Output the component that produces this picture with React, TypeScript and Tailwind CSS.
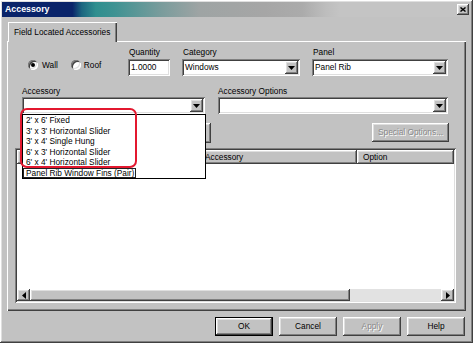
import React from "react";

// classic 3D edges
const raised =
  "shadow-[inset_-1px_-1px_0_#404040,inset_1px_1px_0_#ffffff,inset_-2px_-2px_0_#808080,inset_2px_2px_0_#dfdfdf]";
const sunken =
  "shadow-[inset_1px_1px_0_#808080,inset_-1px_-1px_0_#ffffff,inset_2px_2px_0_#404040,inset_-2px_-2px_0_#dfdfdf]";

const items = [
  "2' x 6' Fixed",
  "3' x 3' Horizontal Slider",
  "3' x 4' Single Hung",
  "6' x 3' Horizontal Slider",
  "6' x 4' Horizontal Slider",
  "Panel Rib Window Fins (Pair)",
];

function Arrow({ dir }: { dir: "down" | "left" | "right" }) {
  if (dir === "down")
    return (
      <svg width="7" height="4" viewBox="0 0 7 4">
        <path d="M0 0h7L3.5 4z" fill="#000" />
      </svg>
    );
  return (
    <svg width="4" height="7" viewBox="0 0 4 7">
      <path d={dir === "left" ? "M4 0v7L0 3.5z" : "M0 0v7l4-3.5z"} fill="#000" />
    </svg>
  );
}

const Select = ({ value, className }: { value?: string; className: string }) => (
  <div className={`flex h-[17px] items-center justify-between bg-white pl-[3px] pr-[2px] ${sunken} ${className}`}>
    <span className="leading-[11px]">{value}</span>
    <div className={`flex h-[13px] w-[13px] items-center justify-center bg-[#c2c2c2] ${raised}`}>
      <Arrow dir="down" />
    </div>
  </div>
);

const Label = ({ children, className = "" }: { children: React.ReactNode; className?: string }) => (
  <div className={`h-[10px] leading-[10px] ${className}`}>{children}</div>
);

const Radio = ({ checked }: { checked?: boolean }) => (
  <div className={`flex h-[10px] w-[10px] items-center justify-center rounded-full bg-white ${sunken}`}>
    {checked && <div className="h-[4px] w-[4px] rounded-full bg-black" />}
  </div>
);

const Btn = ({ label, disabled, isDefault }: { label: string; disabled?: boolean; isDefault?: boolean }) => (
  <div
    className={`flex h-[19px] w-[58px] items-center justify-center bg-[#c2c2c2] ${raised} ${
      isDefault ? "border border-black" : ""
    } ${disabled ? "text-[#8a8a8a] [text-shadow:1px_1px_0_#ffffff]" : ""}`}
  >
    {label}
  </div>
);

export default function App() {
  return (
    <div
      className={`relative flex h-[343px] w-[473px] flex-col overflow-hidden bg-[#c2c2c2] font-['Liberation_Sans',Arial,sans-serif] text-[8.3px] text-black ${raised}`}
    >
      {/* Title bar */}
      <div className="mx-[2px] mt-[2px] flex h-[15px] items-center justify-between bg-[linear-gradient(to_right,#0a246a_0%,#0a246a_15%,#1b6680_17%,#2f8f8f_20%,#3f9292_24%,#7a9c9c_34%,#9ea4a4_42%,#a6a6a6_56%,#ababab_64%,#bdbdbd_69%,#c4c4c4_72%,#c4c4c4_100%)] pl-[3px] pr-[2px]">
        <span className="text-[8.8px] font-bold text-white">Accessory</span>
        <div className={`flex h-[11px] w-[12px] items-center justify-center bg-[#c2c2c2] ${raised}`}>
          <svg width="6" height="5" viewBox="0 0 6 5">
            <path d="M0.5 0.5L5.5 4.5M5.5 0.5L0.5 4.5" stroke="#000" strokeWidth="1.4" />
          </svg>
        </div>
      </div>

      {/* Tab */}
      <div
        className={`relative z-10 ml-[8px] mt-[5px] flex h-[20px] w-[109px] items-center bg-[#c2c2c2] pl-[6px] shadow-[inset_1px_1px_0_#ffffff,inset_-1px_0_0_#404040,inset_-2px_0_0_#808080]`}
      >
        Field Located Accessories
      </div>

      {/* Tab panel */}
      <div
        className={`-mt-[1px] ml-[7px] flex h-[270px] w-[459px] flex-col pt-[6px] shadow-[inset_1px_1px_0_#ffffff,inset_-1px_-1px_0_#404040,inset_-2px_-2px_0_#808080]`}
      >
        {/* Row 1 */}
        <div className="flex">
          <div className="ml-[21px] mt-[12px] flex h-[12px] w-[100px] items-center">
            <Radio checked />
            <span className="ml-[4px]">Wall</span>
            <div className="ml-[13px]">
              <Radio />
            </div>
            <span className="ml-[3px]">Roof</span>
          </div>
          <div className="w-[42px]">
            <Label className="pl-[1px]">Quantity</Label>
            <div className={`mt-[2px] flex h-[17px] items-center bg-white pl-[3px] ${sunken}`}>1.0000</div>
          </div>
          <div className="ml-[12px] w-[118px]">
            <Label className="pl-[1px]">Category</Label>
            <Select value="Windows" className="mt-[2px]" />
          </div>
          <div className="ml-[12px] w-[136px]">
            <Label className="pl-[1px]">Panel</Label>
            <Select value="Panel Rib" className="mt-[2px]" />
          </div>
        </div>

        {/* Row 2 */}
        <div className="mt-[10px] flex">
          <div className="relative z-20 ml-[15px] w-[183px]">
            <Label>Accessory</Label>
            <Select className="mt-[1px]" />
            <div className="absolute left-0 top-full w-[184px] border border-black bg-white">
              {items.map((it, i) => (
                <div key={it} className="h-[10.5px] whitespace-nowrap leading-[10.5px]">
                  <span
                    className={`block ${
                      i === items.length - 1 ? "w-fit border border-[#222] pl-[2px] pr-[1px] leading-[8.5px]" : "pl-[3px]"
                    }`}
                  >
                    {it}
                  </span>
                </div>
              ))}
            </div>
          </div>
          <div className="ml-[13px] w-[230px]">
            <Label>Accessory Options</Label>
            <Select className="mt-[1px]" />
          </div>
        </div>

        {/* Row 3 */}
        <div className="mt-[9px] flex">
          <div className={`ml-[15px] h-[20px] w-[189px] bg-[#c2c2c2] ${raised}`} />
          <div
            className={`ml-[161px] flex h-[19px] w-[77px] items-center justify-center bg-[#c2c2c2] text-[#8a8a8a] [text-shadow:1px_1px_0_#ffffff] ${raised}`}
          >
            Special Options...
          </div>
        </div>

        {/* List view */}
        <div className={`ml-[8px] mt-[5px] flex h-[155px] w-[441px] flex-col bg-white p-[2px] ${sunken}`}>
          <div className="flex h-[14px] bg-[#c2c2c2]">
            <div className={`h-full w-[184px] ${raised}`} />
            <div className={`flex h-full w-[156px] items-center pl-[4px] ${raised}`}>Accessory</div>
            <div className={`flex h-full flex-1 items-center pl-[6px] ${raised}`}>Option</div>
          </div>
          <div className="flex-1 bg-white" />
          <div className="flex h-[12px]">
            <div className={`flex h-full w-[13px] items-center justify-center bg-[#c2c2c2] ${raised}`}>
              <Arrow dir="left" />
            </div>
            <div className={`h-full w-[320px] bg-[#c2c2c2] ${raised}`} />
            <div className="h-full flex-1 bg-[#e2e2e2]" />
            <div className={`flex h-full w-[13px] items-center justify-center bg-[#c2c2c2] ${raised}`}>
              <Arrow dir="right" />
            </div>
          </div>
        </div>
      </div>

      {/* Dialog buttons */}
      <div className="mt-[6px] flex justify-end gap-[6px] pr-[8px]">
        <Btn label="OK" isDefault />
        <Btn label="Cancel" />
        <Btn label="Apply" disabled />
        <Btn label="Help" />
      </div>

      {/* Red highlight drawn over the list */}
      <div className="pointer-events-none absolute left-[20px] top-[108px] z-30 h-[60px] w-[117px] rounded-[7px] border-2 border-[#e3182f]" />
    </div>
  );
}
